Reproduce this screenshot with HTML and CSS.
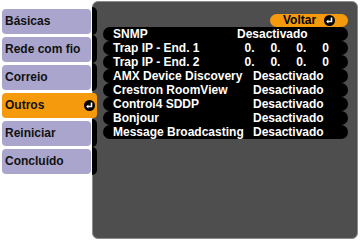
FILE: index.html
```html
<html lang="pt">
<head>
    <meta charset="UTF-8">
    <title>Outros</title>
    <link rel="stylesheet" href="styles.css">
</head>
<body>
    <div class="menu">
        <div class="menu-item"><span class="menu-label">Básicas</span><span class="tab"></span></div>
        <div class="menu-item"><span class="menu-label">Rede com fio</span><span class="tab"></span></div>
        <div class="menu-item"><span class="menu-label">Correio</span><span class="tab"></span></div>
        <div class="menu-item active">
            <span class="menu-label">Outros</span>
            <svg class="enter" width="11" height="11" viewBox="0 0 11 11"><circle cx="5.5" cy="5.5" r="5.5" fill="#000"/><path d="M7.5 2.5 V6.5 H3.5" stroke="#fff" stroke-width="1.6" fill="none"/><path d="M2.2 6.5 L4.4 4.4 V8.6 Z" fill="#fff"/></svg>
        </div>
        <div class="menu-item"><span class="menu-label">Reiniciar</span><span class="tab"></span></div>
        <div class="menu-item"><span class="menu-label">Concluído</span><span class="tab"></span></div>
    </div>

    <div class="panel">
        <div class="top-bar">
            <div class="voltar">
                <span>Voltar</span>
                <svg class="enter" width="11" height="11" viewBox="0 0 11 11"><circle cx="5.5" cy="5.5" r="5.5" fill="#000"/><path d="M7.5 2.5 V6.5 H3.5" stroke="#fff" stroke-width="1.6" fill="none"/><path d="M2.2 6.5 L4.4 4.4 V8.6 Z" fill="#fff"/></svg>
            </div>
        </div>
        <div class="rows">
            <div class="row"><span class="name short">SNMP</span><span>Desactivado</span></div>
            <div class="row"><span class="name">Trap IP - End. 1</span><span class="ip">0.</span><span class="ip">0.</span><span class="ip">0.</span><span class="ip">0</span></div>
            <div class="row"><span class="name">Trap IP - End. 2</span><span class="ip">0.</span><span class="ip">0.</span><span class="ip">0.</span><span class="ip">0</span></div>
            <div class="row"><span class="name">AMX Device Discovery</span><span>Desactivado</span></div>
            <div class="row"><span class="name">Crestron RoomView</span><span>Desactivado</span></div>
            <div class="row"><span class="name">Control4 SDDP</span><span>Desactivado</span></div>
            <div class="row"><span class="name">Bonjour</span><span>Desactivado</span></div>
            <div class="row"><span class="name">Message Broadcasting</span><span>Desactivado</span></div>
        </div>
    </div>
</body>
</html>
```
FILE: styles.css
```css
body {
    margin: 0;
    width: 360px;
    height: 241px;
    background: #fff;
    display: flex;
    font-family: 'Liberation Sans', Arial, sans-serif;
    font-weight: bold;
    font-size: 12px;
    overflow: hidden;
}
.menu {
    width: 90px;
    padding: 9px 0 0 2px;
    display: flex;
    flex-direction: column;
    gap: 3px;
    position: relative;
    z-index: 1;
}
.menu-item {
    display: flex;
    width: 95px;
    height: 25px;
    gap: 1px;
}
.menu-label {
    width: 86px;
    padding-left: 3px;
    line-height: 25px;
    background: #a9a5cc;
    color: #111;
    border-radius: 4px;
}
.tab {
    width: 5px;
    margin: -2px 0 -1px;
    background: #000;
    border-radius: 0 5px 5px 0;
}
.menu-item.active {
    background: #f59a0c;
    border-radius: 4px;
    align-items: center;
}
.menu-item.active .menu-label {
    background: none;
    flex: 1;
}
.menu-item.active .enter {
    margin-right: 2px;
}
.panel {
    box-sizing: border-box;
    width: 266px;
    height: 238px;
    margin-top: 1px;
    background: #4e4e4e;
    border: 1px solid #8c8c8c;
    border-radius: 6px;
    padding: 12px 9px 0 10px;
}
.top-bar {
    display: flex;
    justify-content: flex-end;
}
.voltar {
    width: 78px;
    height: 13px;
    background: #f59a0c;
    border-radius: 7px;
    display: flex;
    align-items: center;
    justify-content: center;
    gap: 8px;
    color: #000;
    line-height: 13px;
}
.enter {
    display: block;
}
.rows {
    display: flex;
    flex-direction: column;
}
.row {
    height: 14px;
    line-height: 14px;
    background: #000;
    border-radius: 7px;
    color: #fff;
    padding-left: 10px;
    display: flex;
    white-space: nowrap;
}
.name {
    width: 140px;
}
.name.short {
    width: 124px;
}
.ip {
    width: 27.5px;
}
```
